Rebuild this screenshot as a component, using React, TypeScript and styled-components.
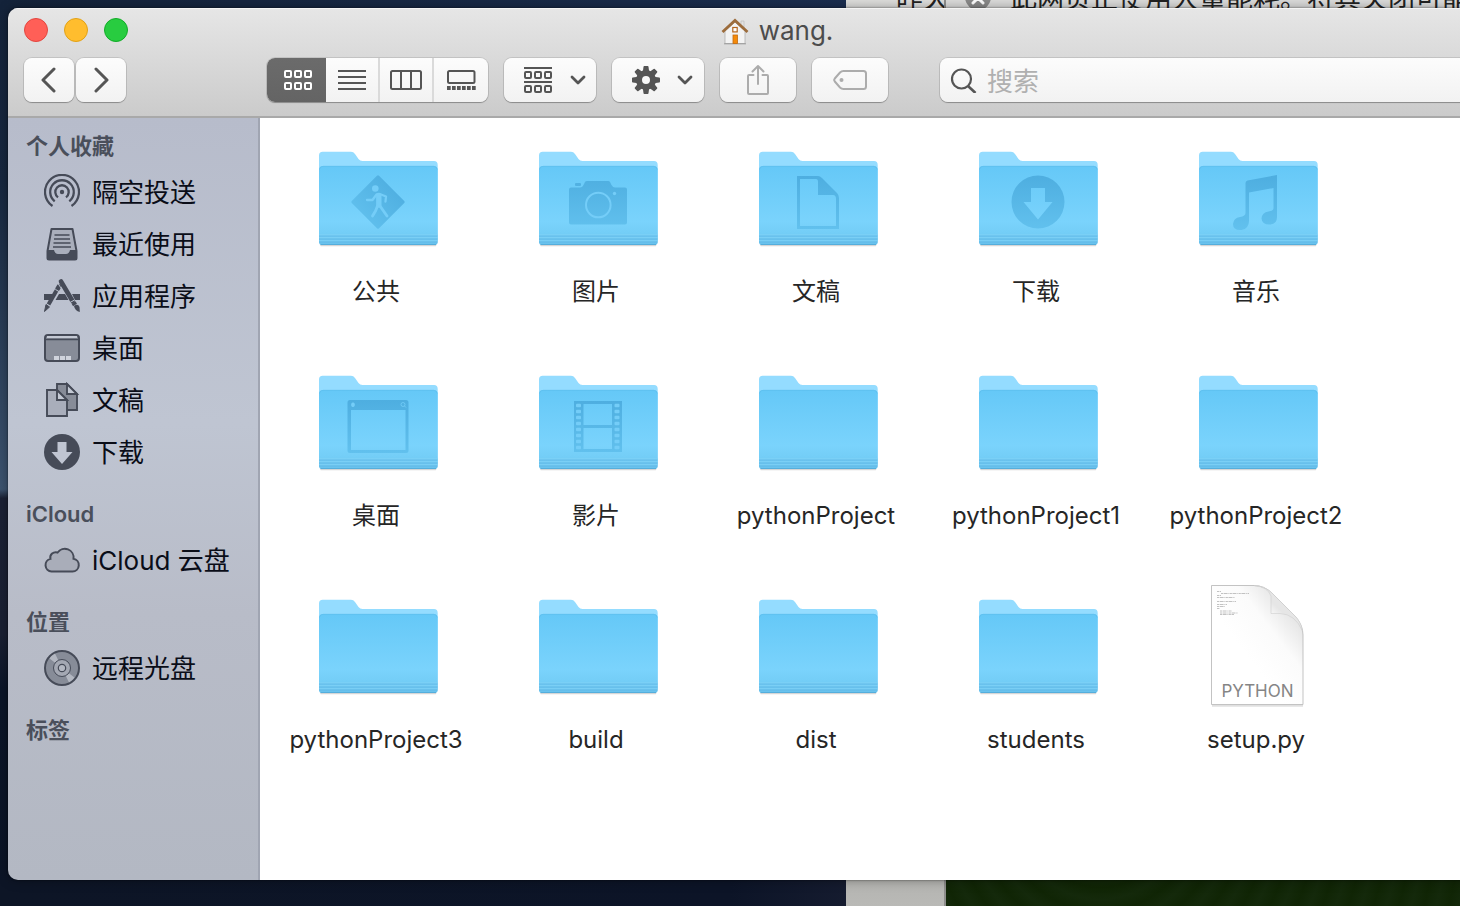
import React from 'react';
import styled, { createGlobalStyle, css } from 'styled-components';

const GlobalStyle = createGlobalStyle`
  *, *::before, *::after { box-sizing: border-box; }
  body {
    margin: 0;
    font-family: Inter, "Noto Sans CJK SC", sans-serif;
    color: #262626;
  }
  button, input { font: inherit; color: inherit; }
  ul { list-style: none; margin: 0; padding: 0; }
  svg { display: block; flex: none; }
`;

/* ---------- desktop and the browser behind the window ---------- */

const Desktop = styled.div`
  position: relative;
  display: flex;
  min-height: 100vh;
  padding: 8px 0 26px 8px;
  overflow: hidden;
  background:
    linear-gradient(90deg, #0d1526, #0c1427 50%, #171d31 60%) bottom / 100% 26px no-repeat,
    linear-gradient(90deg, #14233a, #1b2e50 60%) top / 100% 8px no-repeat,
    linear-gradient(180deg, #14233a, #17273f 20%, #3d5470 54%, #1b2135 55%, #1a2033 70%, #0b1528 76%, #0b1426);
`;

const BackWindow = styled.div`
  position: absolute;
  inset: 0 0 0 846px;
  display: flex;
`;

const BackList = styled.div`
  width: 100px;
  padding-left: 50px;
  overflow: hidden;
  border-right: 2px solid #8e8e8c;
  background: linear-gradient(180deg, #dededc, #b4b4b1 97%, #b9b9b6);
`;

const BackPage = styled.div`
  flex: 1;
  min-width: 0;
  background: repeating-radial-gradient(circle at 30% 90%, #102505 0, #14290b 12px, #102505 24px);
`;

const BackLine = styled.div`
  display: flex;
  align-items: flex-end;
  gap: 18px;
  height: 13px;
  font-size: 27px;
  line-height: 28px;
  white-space: nowrap;
  color: #222;
`;

const BackNotice = styled(BackLine)`
  padding-left: 18px;
  background: #dcdcdb;
`;

/* ---------- window frame ---------- */

const Window = styled.main`
  position: relative;
  flex: 1;
  display: flex;
  flex-direction: column;
  margin-right: -86px;
  border-radius: 10px;
  overflow: hidden;
  box-shadow: 0 0 2px rgba(0, 0, 0, 0.6), 0 0 12px rgba(0, 0, 0, 0.35);
`;

const Header = styled.header`
  border-bottom: 2px solid #a9a9a9;
  background: linear-gradient(180deg, #e6e6e6, #cbcbcb);
  box-shadow: inset 0 1px 0 #f4f4f4;
`;

const TitleRow = styled.div`
  display: grid;
  grid-template-columns: 1fr auto 1fr;
  align-items: center;
  height: 44px;
  padding: 0 16px;
`;

const Lights = styled.div`
  display: flex;
  gap: 16px;
`;

const Light = styled.button<{ $fill: string; $edge: string }>`
  width: 24px;
  height: 24px;
  padding: 0;
  border: 1px solid ${(p) => p.$edge};
  border-radius: 50%;
  background: ${(p) => p.$fill};
`;

const Title = styled.h1`
  display: flex;
  align-items: center;
  gap: 10px;
  margin: 0;
  padding-top: 2px;
  font-size: 26px;
  font-weight: 400;
  line-height: 32px;
  color: #4c4c4c;
`;

const Toolbar = styled.div`
  display: flex;
  gap: 16px;
  padding: 6px 16px 14px;
`;

const raised = css`
  height: 44px;
  border: 0;
  border-radius: 8px;
  background: linear-gradient(180deg, #fcfcfc, #f2f2f2);
  box-shadow: 0 0 0 1px rgba(0, 0, 0, 0.1), 0 1px 1px rgba(0, 0, 0, 0.25);
`;

const NavButtons = styled.div`
  display: flex;
  gap: 2px;
  margin-right: 125px;
`;

const ToolButton = styled.button<{ $width: number; $muted?: boolean }>`
  ${raised}
  display: flex;
  align-items: center;
  justify-content: center;
  gap: 17px;
  width: ${(p) => p.$width}px;
  padding: 0;
  color: ${(p) => (p.$muted ? '#acacac' : '#555')};
`;

const MenuButton = styled(ToolButton)`
  justify-content: flex-start;
  padding-left: 20px;
`;

const ViewSwitch = styled.div`
  ${raised}
  display: flex;
  overflow: hidden;
`;

const ViewButton = styled.button<{ $on?: boolean }>`
  display: flex;
  align-items: center;
  justify-content: center;
  width: 54px;
  padding: 0;
  border: 0;
  border-right: 2px solid #dadada;
  background: none;
  color: #555;
  &:last-child { border-right: 0; }
  ${(p) => p.$on && css`
    width: 59px;
    padding-left: 4px;
    border-right: 0;
    background: linear-gradient(180deg, #6b6b6b, #646464);
    color: #fff;
  `}
`;

const Search = styled.label`
  ${raised}
  flex: 1;
  display: flex;
  align-items: center;
  gap: 10px;
  margin-left: 36px;
  padding-left: 10px;
  color: #555;
`;

const SearchInput = styled.input`
  flex: 1;
  min-width: 0;
  height: 40px;
  padding: 2px 0 0;
  border: 0;
  outline: 0;
  background: none;
  font-size: 26px;
  &::placeholder { color: #b0b0b0; opacity: 1; }
`;

/* ---------- sidebar ---------- */

const Body = styled.div`
  flex: 1;
  display: flex;
`;

const Sidebar = styled.nav`
  flex: none;
  display: flex;
  flex-direction: column;
  gap: 16px;
  width: 252px;
  padding: 8px 0 24px;
  border-right: 2px solid #a0a5b2;
  background: linear-gradient(180deg, #b7bccb, #bfc5d2 40%, #b8bcc8 65%, #b3b8c3);
`;

const GroupTitle = styled.h2`
  margin: 0;
  padding-left: 18px;
  font-size: 22px;
  font-weight: 600;
  line-height: 40px;
  color: #4a4f5b;
`;

const Place = styled.a`
  display: flex;
  align-items: center;
  gap: 12px;
  height: 52px;
  padding-left: 36px;
  font-size: 26px;
  line-height: 32px;
  white-space: nowrap;
  text-decoration: none;
  color: #0a0d18;
`;

const PlaceName = styled.span`
  padding-top: 2px;
`;

/* ---------- file grid ---------- */

const Files = styled.ul`
  && { padding: 16px 6px 50px; }
  flex: 1;
  display: grid;
  grid-template-columns: repeat(auto-fill, 220px);
  align-content: start;
  row-gap: 50px;
  background: #fff;
`;

const FileButton = styled.button`
  display: flex;
  flex-direction: column;
  align-items: center;
  gap: 14px;
  width: 100%;
  padding: 0;
  border: 0;
  background: none;
  font-size: 24px;
  line-height: 32px;
`;

/* ---------- toolbar icons ---------- */

const line = { fill: 'none', stroke: 'currentColor', strokeWidth: 2 } as const;

const Chevron = ({ right }: { right?: boolean }) => (
  <svg width="16" height="26" viewBox="0 0 16 26" {...line} strokeWidth={3} strokeLinecap="round" strokeLinejoin="round">
    <path d={right ? 'M3 2 14 13 3 24' : 'M13 2 2 13 13 24'} />
  </svg>
);

const Down = () => (
  <svg width="16" height="10" viewBox="0 0 16 10" {...line} strokeWidth={2.8} strokeLinecap="round" strokeLinejoin="round">
    <path d="M2 2 8 8 14 2" />
  </svg>
);

const Squares = ({ y }: { y: number }) => (
  <>
    {[1, 11, 21].map((x) => <rect key={x} x={x} y={y} width="6" height="6" rx="1" />)}
  </>
);

const IconGrid = () => (
  <svg width="29" height="20" viewBox="0 0 29 20" {...line}><Squares y={1} /><Squares y={13} /></svg>
);
const IconList = () => (
  <svg width="28" height="20" viewBox="0 0 28 20" {...line}><path d="M0 1h28M0 7h28M0 13h28M0 19h28" /></svg>
);
const IconColumns = () => (
  <svg width="32" height="20" viewBox="0 0 32 20" {...line}>
    <rect x="1" y="1" width="30" height="18" rx="1.5" /><path d="M11 1v18M21 1v18" />
  </svg>
);
const IconGallery = () => (
  <svg width="29" height="20" viewBox="0 0 29 20" {...line}>
    <rect x="1" y="1" width="26.5" height="12" rx="1.5" />
    <path d="M0 18h29" strokeWidth="4" strokeDasharray="3.7 1.3" />
  </svg>
);
const IconGroup = () => (
  <svg width="29" height="26" viewBox="0 0 29 26" {...line}>
    <path d="M0 1h28M0 15h28" /><Squares y={5} /><Squares y={19} />
  </svg>
);
const IconGear = () => (
  <svg width="28" height="28" viewBox="-14 -14 28 28" fill="currentColor">
    <path fillRule="evenodd" d="M0-10A10 10 0 1 0 0 10 10 10 0 1 0 0-10ZM0-4A4 4 0 1 1 0 4 4 4 0 1 1 0-4Z" />
    {[0, 45, 90, 135, 180, 225, 270, 315].map((a) => (
      <path key={a} d="M-3.200-8-2.500-13.200Q-2.400-14-1.600-14H1.600Q2.400-14 2.500-13.200L3.200-8Z" transform={`rotate(${a})`} />
    ))}
  </svg>
);
const IconShare = () => (
  <svg width="24" height="32" viewBox="0 0 24 32" {...line} strokeLinecap="round" strokeLinejoin="round">
    <path d="M7.500 11H3Q2 11 2 12V29Q2 30 3 30H21Q22 30 22 29V12Q22 11 21 11H16.500M12 20V2M6.500 7.500 12 2 17.500 7.500" />
  </svg>
);
const IconTag = () => (
  <svg width="34" height="20" viewBox="0 0 34 20" {...line}>
    <path d="M10.500 1H30.500Q33 1 33 3.500V16.500Q33 19 30.500 19H10.500Q8.500 19 7 17.500L1.800 11.500Q.600 10 1.800 8.500L7 2.500Q8.500 1 10.500 1Z" />
    <circle cx="8.500" cy="10" r="2" fill="currentColor" stroke="none" />
  </svg>
);
const IconSearch = () => (
  <svg width="27" height="26" viewBox="0 0 27 26" {...line} strokeWidth={2.2}>
    <circle cx="11.500" cy="12" r="9.500" /><path d="M18 19 25.500 26" strokeWidth="2.600" />
  </svg>
);

const House = () => (
  <svg width="28" height="28" viewBox="0 0 28 28">
    <path d="M20 4h3v8h-3z" fill="#e2e2e2" stroke="#bbb" strokeWidth=".6" />
    <path d="M4 14 14 5 24 14V26.500H4Z" fill="#f3f3f3" stroke="#aeaeae" strokeWidth=".8" />
    <path d="M3 26.800H25" stroke="#9a9a9a" />
    <path d="M1.500 15 14 3.500 26.500 15" fill="none" stroke="#9c6c3c" strokeWidth="2.800" />
    <rect x="11.800" y="10.500" width="4.400" height="4.400" fill="#fff" stroke="#b4651c" strokeWidth="1.200" />
    <rect x="12" y="18" width="4.500" height="8.500" fill="#f58b0a" stroke="#c46a10" strokeWidth=".8" />
  </svg>
);

const CloseBadge = () => (
  <svg width="28" height="28" viewBox="0 0 28 28">
    <circle cx="14" cy="12" r="13" fill="#8a8a8a" />
    <path d="M9 8 19 18M19 8 9 18" stroke="#fff" strokeWidth="3" strokeLinecap="round" />
  </svg>
);

/* ---------- sidebar icons ---------- */

const ink = '#464b58';
const tint = '#878c98';

const placeIcons: Record<string, React.ReactNode> = {
  airdrop: (
    <g fill="none" stroke={ink} strokeWidth="2.300">
      <path d="M8.500 32A17 17 0 1 1 27.500 32" />
      <path d="M10.700 27.300A11.800 11.800 0 1 1 25.300 27.300" />
      <path d="M14 23.300A6.700 6.700 0 1 1 22 23.300" />
      <circle cx="18" cy="18" r="2.200" fill={ink} stroke="none" />
    </g>
  ),
  recents: (
    <>
      <path d="M7.500 3H28.500L32.500 25V32Q32.500 33.500 31 33.500H5Q3.500 33.500 3.500 32V25Z" fill="#a9aebb" stroke={ink} strokeWidth="2" strokeLinejoin="round" />
      <path d="M3 24H10Q11 28 14 28H22Q25 28 26 24H33V32Q33 33.500 31.500 33.500H4.500Q3 33.500 3 32Z" fill={ink} />
      <path d="M10.500 9H25.500M10 13H26M9.500 17H26.500M9 21H27" stroke={ink} strokeWidth="1.700" />
    </>
  ),
  apps: (
    <g stroke={ink} fill={ink}>
      <path d="M0 16H10L6 22H0ZM15 16H21L24.500 22H11.500ZM28 16H36V22H31Z" stroke="none" />
      <path d="M17 3.500 28.500 23" strokeWidth="4.600" strokeLinecap="round" />
      <path d="M29.500 24.500 31 27" strokeWidth="4.500" />
      <path d="M30 28Q34 25 35.500 29L35.800 34Q31 33 30 28Z" stroke="none" />
      <path d="M15 8.500 13.500 11" strokeWidth="4.600" strokeLinecap="round" />
      <path d="M12.500 12.500 4.500 26.500" strokeWidth="4" />
      <path d="M2 26.500 5.500 29 .500 33.500Z" strokeWidth="1" />
      <path d="M11.500 11.500 15 13.500M26 24.500 30.500 22M14 5.500 18 11.500" stroke="#bbc1ce" strokeWidth="1" />
    </g>
  ),
  desktop: (
    <>
      <rect x="1" y="5" width="34" height="26" rx="3" fill={tint} stroke={ink} strokeWidth="2" />
      <path d="M3 6H33V8H3Z" fill="#c4c9d4" />
      <path d="M1 9.500H35" stroke={ink} strokeWidth="1.600" />
      <path d="M10 26h5v4h-5zM16 26h5v4h-5zM22 26h5v4h-5z" fill="#cfd3dc" />
    </>
  ),
  documents: (
    <g stroke={ink} strokeWidth="1.900">
      <path d="M13 2H23L33 12V28H13Z" fill={tint} />
      <path d="M23 2V12H33Z" fill="#c4c9d4" />
      <path d="M3 8H13L23 18V34H3Z" fill="#a9aebb" />
      <path d="M13 8V18H23Z" fill="#c4c9d4" />
    </g>
  ),
  downloads: (
    <>
      <circle cx="18" cy="18" r="18" fill={ink} />
      <path d="M13.500 8H22.500V18H28.500L18 30 7.500 18H13.500Z" fill="#c0c5d2" />
    </>
  ),
  cloud: (
    <path
      d="M7.500 29.500A6.400 6.400 0 0 1 6.400 16.900A5.500 5.500 0 0 1 13.600 10.500A8.800 8.800 0 0 1 29.500 16.800A6.400 6.400 0 0 1 28.500 29.500Z"
      fill="#a9adb9" stroke={ink} strokeWidth="2"
    />
  ),
  disc: (
    <g fill="none" stroke={ink}>
      <circle cx="18" cy="18" r="17" fill={tint} strokeWidth="2" />
      <path d="M18 18 5.500 8.500A16 16 0 0 1 11 3.500ZM18 18 30.500 27.500A16 16 0 0 1 25 32.500Z" fill="#b3b7c1" stroke="none" />
      <circle cx="18" cy="18" r="8.500" fill="#a4a8b3" strokeWidth="1" />
      <circle cx="18" cy="18" r="3.700" fill="#b3b7c1" strokeWidth="1.200" />
    </g>
  ),
};

const sidebar = [
  {
    title: '个人收藏',
    places: [
      ['airdrop', '隔空投送'],
      ['recents', '最近使用'],
      ['apps', '应用程序'],
      ['desktop', '桌面'],
      ['documents', '文稿'],
      ['downloads', '下载'],
    ],
  },
  { title: 'iCloud', places: [['cloud', 'iCloud 云盘']] },
  { title: '位置', places: [['disc', '远程光盘']] },
  { title: '标签', places: [] },
];

/* ---------- folders and documents ---------- */

const deep = 'url(#emboss)';
const pale = '#74cdf8';

const emblems: Record<string, React.ReactNode> = {
  public: (
    <>
      <rect x="44.700" y="48.700" width="38.600" height="38.600" rx="1.500" transform="rotate(45 64 68)" fill={deep} />
      <circle cx="61.300" cy="54.500" r="3.300" fill={pale} />
      <g fill="none" stroke={pale} strokeLinecap="round" strokeLinejoin="round">
        <path d="M64.800 61.500V71" strokeWidth="5.400" />
        <path d="M53 66H58.500L62.500 60.500H67L72 62.500 71.500 67.500" strokeWidth="2.300" />
        <path d="M63.500 72 61.500 77 58.500 82M66 72 69.500 77 73 82" strokeWidth="2.900" />
      </g>
    </>
  ),
  pictures: (
    <>
      <path d="M37 53.500H46Q48.500 53.500 50 50L51 48Q51.500 47 53 47H74Q75.500 47 76 48L77.500 51Q79 53.500 81 53.500H91Q93 53.500 93 55.500V88.500Q93 90.500 91 90.500H37Q35 90.500 35 88.500V55.500Q35 53.500 37 53.500Z" fill={deep} />
      <rect x="41" y="49" width="6" height="3" rx="1" fill={deep} />
      <circle cx="64.300" cy="71" r="12.300" fill="none" stroke={pale} strokeWidth="2" />
      <circle cx="80.500" cy="59.500" r="1.700" fill={pale} />
    </>
  ),
  documents: (
    <path fillRule="evenodd" fill={deep} d="M43 42H64Q66 42 68 44L83 59Q85 61 85 64V95H43ZM46 45V92H82V65Q82 61 79 61H64V48Q64 45 62 45Z" />
  ),
  downloads: (
    <path fillRule="evenodd" fill={deep} d="M64 41.500A26.500 26.500 0 1 0 64 94.500 26.500 26.500 0 1 0 64 41.500ZM57 54H71V68H78.500L64 85.500 49.500 68H57Z" />
  ),
  music: (
    <path fillRule="evenodd" fill={deep} d="M53.500 46.500 83 41V83Q83 90 76.500 90.500 68 91 67.500 84.500 68 78.500 74.500 77.500 79.500 77 79.500 74V54L55 58.500V87Q55 94.500 47.500 96 39 96.500 39 90 39.500 84 46 83 51.500 82 51.500 79V49Q51.500 47 53.500 46.500Z" />
  ),
  desktop: (
    <>
      <path fillRule="evenodd" fill={deep} d="M36 42H92Q94.500 42 94.500 44.500V92.500Q94.500 95 92 95H36Q33.500 95 33.500 92.500V44.500Q33.500 42 36 42ZM37 52V92H91.500V52Z" />
      <path d="M39 44.500C41.500 44 41.500 49.500 39 49 36.500 49.500 36.500 44 39 44.500Z" fill={pale} />
      <circle cx="89" cy="46.500" r="2" fill="none" stroke={pale} strokeWidth=".8" />
      <path d="M90.500 48 92 49.500" stroke={pale} strokeWidth=".8" />
    </>
  ),
  movies: (
    <>
      <path fillRule="evenodd" fill={deep} d="M40 43H88V94H40ZM49.500 46V67H78V46ZM49.500 70V91H78V70Z" />
      {[0, 1, 2, 3, 4, 5, 6, 7].map((i) => (
        <g key={i} fill={pale}>
          <rect x="42" y={45.800 + i * 6} width="5" height="3.500" rx="1" />
          <rect x="80.500" y={45.800 + i * 6} width="5" height="3.500" rx="1" />
        </g>
      ))}
    </>
  ),
};

const Folder = ({ emblem }: { emblem?: string }) => (
  <svg width="128" height="128" viewBox="-2 0 128 128">
    <defs>
      <linearGradient id="front" x1="0" y1="0" x2="0" y2="1">
        <stop offset="0" stopColor="#65c8f7" />
        <stop offset=".7" stopColor="#7ad3fc" />
        <stop offset=".84" stopColor="#74cef7" />
        <stop offset="1" stopColor="#68c1ec" />
      </linearGradient>
      <linearGradient id="emboss" gradientUnits="userSpaceOnUse" x1="0" y1="42" x2="0" y2="96">
        <stop offset="0" stopColor="#4eaee0" />
        <stop offset="1" stopColor="#62c1ee" />
      </linearGradient>
    </defs>
    <path d="M7 111.500H121.500" stroke="#000" strokeOpacity=".16" strokeLinecap="round" strokeWidth="1.500" />
    <path d="M5 107V21.500Q5 17.800 8.700 17.800H37Q39.500 17.800 41 20L44.500 25Q46 27 48.500 27H120Q123.700 27 123.700 31V107Z" fill="#94dcff" />
    <path d="M5 36Q5 32 9 32H119.700Q123.700 32 123.700 36V108Q123.700 111 120.700 111H8Q5 111 5 108Z" fill="url(#front)" />
    <path d="M5.500 35.500Q6 32.300 9 32.300H119.700Q122.700 32.300 123.200 35.500" fill="none" stroke="#5cbdec" strokeWidth=".7" />
    <path d="M5 102H123.700M5 105H123.700M5 108H123.700" stroke="#5db6e4" strokeOpacity=".75" />
    <path d="M5 100.800H123.700M5 103.700H123.700M5 106.700H123.700" stroke="#84d4f8" strokeWidth=".7" />
    <path d="M6.500 110.500H122" stroke="#55aedc" />
    {emblem && emblems[emblem]}
  </svg>
);

const PythonFile = () => (
  <svg width="128" height="128" viewBox="-2 0 128 128">
    <defs>
      <linearGradient id="page" x1="1" y1="0" x2=".4" y2=".6">
        <stop offset=".25" stopColor="#e2e2e2" />
        <stop offset=".6" stopColor="#fbfbfb" />
        <stop offset="1" stopColor="#fff" />
      </linearGradient>
      <linearGradient id="curl" x1="0" y1="1" x2=".5" y2=".5">
        <stop offset="0" stopColor="#fff" />
        <stop offset=".7" stopColor="#f9f9f9" />
        <stop offset="1" stopColor="#e6e6e6" />
      </linearGradient>
    </defs>
    <path d="M18 123.700H109" stroke="#000" strokeOpacity=".12" strokeWidth="2" />
    <path d="M17.500 3.500H60Q70 3.500 78 11L101 34Q109 43 109 53V122.500H17.500Z" fill="url(#page)" stroke="#bcbcbc" strokeWidth=".9" />
    <path d="M60 3.500Q74 5 77 14V31.500H86Q101 32 108.500 49 107 40 101 34L78 11Q70 3.500 60 3.500Z" fill="url(#curl)" stroke="#cfcfcf" strokeWidth=".6" />
    <g stroke="#8f8f8f" strokeWidth=".9" strokeDasharray="2 .6 4 .8 1 .5">
      <path d="M23 9.500H27M27 11.500H55M23 13.500H27M23 15.500H41M23 19.500H42M23 22.500H33M23 24.500H31M23 26.500H26M26 29H38M26 31H44M26 32.500H40" strokeOpacity=".6" />
    </g>
    <text x="63.500" y="115" textAnchor="middle" fontFamily="Inter, sans-serif" fontSize="17" fill="#858585">PYTHON</text>
  </svg>
);

const files: { name: string; emblem?: string; document?: boolean }[] = [
  { name: '公共', emblem: 'public' },
  { name: '图片', emblem: 'pictures' },
  { name: '文稿', emblem: 'documents' },
  { name: '下载', emblem: 'downloads' },
  { name: '音乐', emblem: 'music' },
  { name: '桌面', emblem: 'desktop' },
  { name: '影片', emblem: 'movies' },
  { name: 'pythonProject' },
  { name: 'pythonProject1' },
  { name: 'pythonProject2' },
  { name: 'pythonProject3' },
  { name: 'build' },
  { name: 'dist' },
  { name: 'students' },
  { name: 'setup.py', document: true },
];

export default function App() {
  return (
    <>
      <GlobalStyle />
      <Desktop>
        <BackWindow>
          <BackList><BackLine>昨天</BackLine></BackList>
          <BackPage>
            <BackNotice>
              <CloseBadge />
              此网页正使用大量能耗。将其关闭可能
            </BackNotice>
          </BackPage>
        </BackWindow>

        <Window>
          <Header>
            <TitleRow>
              <Lights>
                <Light type="button" aria-label="关闭" $fill="#ff5f57" $edge="#e2463f" />
                <Light type="button" aria-label="最小化" $fill="#ffbd2e" $edge="#e1a116" />
                <Light type="button" aria-label="缩放" $fill="#28cc40" $edge="#12ac28" />
              </Lights>
              <Title><House />wang.</Title>
            </TitleRow>
            <Toolbar>
              <NavButtons>
                <ToolButton type="button" aria-label="后退" $width={50}><Chevron /></ToolButton>
                <ToolButton type="button" aria-label="前进" $width={50}><Chevron right /></ToolButton>
              </NavButtons>
              <ViewSwitch role="group" aria-label="显示方式">
                <ViewButton type="button" aria-label="图标" aria-pressed="true" $on><IconGrid /></ViewButton>
                <ViewButton type="button" aria-label="列表" aria-pressed="false"><IconList /></ViewButton>
                <ViewButton type="button" aria-label="分栏" aria-pressed="false"><IconColumns /></ViewButton>
                <ViewButton type="button" aria-label="画廊" aria-pressed="false"><IconGallery /></ViewButton>
              </ViewSwitch>
              <MenuButton type="button" aria-label="分组" $width={92}><IconGroup /><Down /></MenuButton>
              <MenuButton type="button" aria-label="操作" $width={92}><IconGear /><Down /></MenuButton>
              <ToolButton type="button" aria-label="共享" $width={76} $muted><IconShare /></ToolButton>
              <ToolButton type="button" aria-label="标签" $width={76} $muted><IconTag /></ToolButton>
              <Search>
                <IconSearch />
                <SearchInput type="search" placeholder="搜索" aria-label="搜索" />
              </Search>
            </Toolbar>
          </Header>

          <Body>
            <Sidebar>
              {sidebar.map((group) => (
                <section key={group.title}>
                  <GroupTitle>{group.title}</GroupTitle>
                  {group.places.map(([icon, name]) => (
                    <Place key={name} href="#">
                      <svg width="36" height="36" viewBox="0 0 36 36">{placeIcons[icon]}</svg>
                      <PlaceName>{name}</PlaceName>
                    </Place>
                  ))}
                </section>
              ))}
            </Sidebar>
            <Files>
              {files.map((file) => (
                <li key={file.name}>
                  <FileButton type="button">
                    {file.document ? <PythonFile /> : <Folder emblem={file.emblem} />}
                    {file.name}
                  </FileButton>
                </li>
              ))}
            </Files>
          </Body>
        </Window>
      </Desktop>
    </>
  );
}
